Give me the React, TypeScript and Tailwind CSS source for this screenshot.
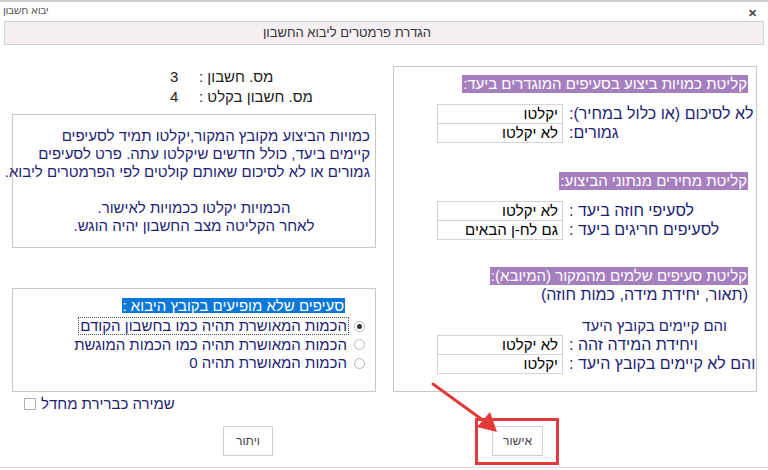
const FONT = "font-['Liberation_Sans',Arial,sans-serif]";

function Field({ label, value }: { label: string; value: string }) {
  return (
    <div className="flex items-center h-[19px]">
      <div className="w-[126px] h-[20px] border border-[#d4d4d4] bg-white flex items-center justify-end pr-[4px] text-[15px] text-black -mb-px">
        <span dir="rtl">{value}</span>
      </div>
      <span dir="rtl" className="ml-[6px] whitespace-nowrap text-[16px] text-[#1e1e74]">
        {label}
      </span>
    </div>
  );
}

function SectionTitle({ children }: { children: string }) {
  return (
    <div className="flex justify-end pr-[8px]">
      <span dir="rtl" className="bg-[#a67fbf] text-white text-[15px] leading-[18px] px-px whitespace-nowrap">
        {children}
      </span>
    </div>
  );
}

function Radio({ label, checked, focused }: { label: string; checked?: boolean; focused?: boolean }) {
  return (
    <div className="flex items-center justify-end h-[18.5px] pr-[10px]">
      <span
        dir="rtl"
        className={
          "text-[15px] leading-[16px] text-[#1e1e74] whitespace-nowrap px-px " +
          (focused ? "outline outline-1 outline-dotted outline-[#555]" : "")
        }
      >
        {label}
      </span>
      <span className="ml-[6px] w-[11px] h-[11px] rounded-full border border-[#b8b8b8] bg-white flex items-center justify-center">
        {checked && <span className="w-[5px] h-[5px] rounded-full bg-[#333]" />}
      </span>
    </div>
  );
}

export default function App() {
  return (
    <div className={`relative w-[768px] h-[470px] bg-white border-t-2 border-[#cfcfcf] flex flex-col ${FONT}`}>
      {/* window title */}
      <div className="flex items-center justify-between h-[19px] px-[3px]">
        <span dir="rtl" className="text-[11px] text-[#5a5a5a] font-['DejaVu_Sans',sans-serif] tracking-[-0.5px]">
          יבוא חשבון
        </span>
        <span className="text-[11px] font-bold text-[#444] mr-[8px] mt-[4px]">✕</span>
      </div>

      {/* header */}
      <div className="mx-[4px] h-[24px] bg-[#f5eff4] border border-[#cfcfcf] flex items-center justify-center pr-[74px]">
        <span dir="rtl" className="text-[13px] text-[#333]">
          הגדרת פרמטרים ליבוא החשבון
        </span>
      </div>

      {/* body */}
      <div className="flex h-[347px]">
        {/* left column */}
        <div className="ml-[12px] w-[364px] flex flex-col">
          <div className="mt-[22px] flex flex-col text-[15px] text-[#222]">
            <div className="flex items-center h-[20px] ml-[158px]">
              <span className="w-[29px]">3</span>
              <span dir="rtl">מס. חשבון :</span>
            </div>
            <div className="flex items-center h-[20px] ml-[158px]">
              <span className="w-[29px]">4</span>
              <span dir="rtl">מס. חשבון בקלט :</span>
            </div>
          </div>

          <div dir="rtl" className="mt-[7px] h-[135px] border border-[#c8c8c8] pt-[12px] pr-[5px] text-[15px] leading-[18px] text-[#1e1e74]">
            <div>כמויות הביצוע מקובץ המקור,יקלטו תמיד לסעיפים</div>
            <div>קיימים ביעד, כולל חדשים שיקלטו עתה. פרט לסעיפים</div>
            <div className="whitespace-nowrap">גמורים או לא לסיכום שאותם קולטים לפי הפרמטרים ליבוא.</div>
            <div className="h-[18px]" />
            <div className="text-center pl-[5px]">הכמויות יקלטו ככמויות לאישור.</div>
            <div className="text-center pl-[5px]">לאחר הקליטה מצב החשבון יהיה הוגש.</div>
          </div>

          <div className="mt-[40px] h-[105px] border border-[#c8c8c8] pt-[9px]">
            <div className="flex justify-end pr-[30px] mb-[4px]">
              <span dir="rtl" className="bg-[#0a78d7] text-white text-[15px] leading-[15px] px-px whitespace-nowrap">
                סעיפים שלא מופיעים בקובץ היבוא :
              </span>
            </div>
            <Radio label="הכמות המאושרת תהיה כמו בחשבון הקודם" checked focused />
            <Radio label="הכמות המאושרת תהיה כמו הכמות המוגשת" />
            <Radio label="הכמות המאושרת תהיה 0" />
          </div>
        </div>

        {/* right column */}
        <div className="ml-[17px] mt-[21px] w-[364px] h-[326px] border border-[#c8c8c8] flex flex-col pt-[8px]">
          <SectionTitle>קליטת כמויות ביצוע בסעיפים המוגדרים ביעד:</SectionTitle>
          <div className="mt-[11px] ml-[43px] flex flex-col">
            <Field label="לא לסיכום (או כלול במחיר):" value="יקלטו" />
            <Field label="גמורים:" value="לא יקלטו" />
          </div>
          <div className="mt-[30px]">
            <SectionTitle>קליטת מחירים מנתוני הביצוע:</SectionTitle>
          </div>
          <div className="mt-[11px] ml-[43px] flex flex-col">
            <Field label="לסעיפי חוזה ביעד :" value="לא יקלטו" />
            <Field label="לסעיפים חריגים ביעד :" value="גם לח-ן הבאים" />
          </div>
          <div className="mt-[28px]">
            <SectionTitle>קליטת סעיפים שלמים מהמקור (המיובא):</SectionTitle>
          </div>
          <div dir="rtl" className="pr-[8px] text-[16px] leading-[20px] text-[#1e1e74]">
            (תאור, יחידת מידה, כמות חוזה)
          </div>
          <div dir="rtl" className="mt-[12px] pr-[29px] text-[15px] leading-[18px] text-[#1e1e74]">
            והם קיימים בקובץ היעד
          </div>
          <div className="ml-[43px] flex flex-col">
            <Field label="ויחידת המידה זהה :" value="לא יקלטו" />
            <Field label="והם לא קיימים בקובץ היעד :" value="יקלטו" />
          </div>
        </div>
      </div>

      {/* checkbox */}
      <div className="flex items-center h-[20px] ml-[24px] mt-[2px]">
        <span className="w-[12px] h-[12px] border border-[#b0b0b0] bg-white" />
        <span dir="rtl" className="ml-[5px] text-[15px] text-[#1e1e74]">
          שמירה כברירת מחדל
        </span>
      </div>

      {/* buttons */}
      <div className="flex mt-[12px] h-[30px]">
        <button className="ml-[223px] w-[50px] h-[30px] border border-[#cfcfcf] bg-white text-[12px] text-[#444]">
          <span dir="rtl">ויתור</span>
        </button>
        <button className="ml-[219px] w-[51px] h-[30px] border border-[#cfcfcf] bg-white text-[12px] text-[#444]">
          <span dir="rtl">אישור</span>
        </button>
      </div>

      <div className="mt-auto h-[3px] border-t border-[#dcdcdc]" />

      {/* annotation */}
      <div className="absolute left-[475px] top-[416px] w-[84px] h-[47px] border-[3px] border-[#e2393b]" />
      <svg className="absolute left-0 top-0 pointer-events-none" width="768" height="470">
        <line x1="433" y1="382" x2="484" y2="419" stroke="#e2393b" strokeWidth="3" strokeLinecap="round" />
        <polygon points="497,430 477,425 490,410" fill="#e2393b" />
      </svg>
    </div>
  );
}
